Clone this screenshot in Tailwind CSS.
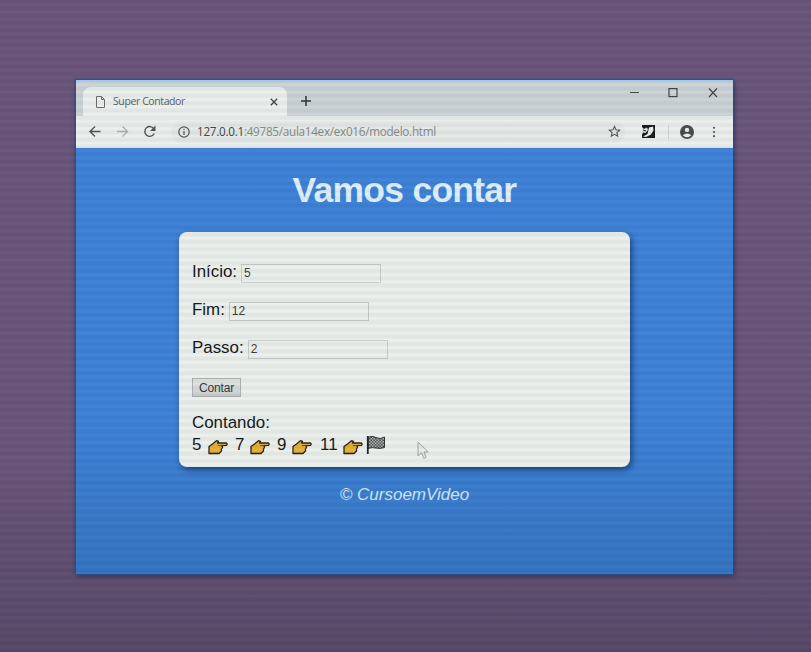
<!DOCTYPE html>
<html lang="pt-br">
<head>
<meta charset="utf-8">
<title>Super Contador</title>
<script src="https://cdn.jsdelivr.net/npm/@tailwindcss/browser@4"></script>
</head>
<body class="relative w-[811px] h-[652px] overflow-hidden bg-linear-to-b from-[#6a567b] from-70% to-[#58496a] pt-20 pl-[76px] font-['Liberation_Sans',Arial,sans-serif]">
<svg class="hidden">
  <symbol id="hand" viewBox="0 0 20 16"><path d="M1 7.500 L4.500 5 L8.500 1.700 L10.500 2.300 L9.500 4 L18.500 4 Q19.700 5.200 18.500 6.400 L14 6.700 L14.500 8.500 L13.500 10 L13.500 12 L11 14.500 L1 14.500Z" fill="#e4b038" stroke="#26221a" stroke-width="1.300" stroke-linejoin="round"/><path d="M10 6.500 L14 6.700" stroke="#4a3b1b" stroke-width=".8" fill="none"/></symbol>
</svg>
<main class="w-[657px] h-[494px] flex flex-col bg-linear-to-b from-[#3e82d8] from-70% to-[#3575c2] shadow-[0_0_2px_1px_#24508c,1px_2px_5px_#382f55]">
  <header class="h-[68px] bg-[#ebefed] border-b border-[#dcebf4]">
    <div class="h-9 flex bg-[#ccd3d6] border-t-2 border-[#a4d3f8] pl-[7px]">
      <div class="w-[204px] h-[29px] mt-[5px] bg-[#ebefed] rounded-t-lg flex items-center pl-3 pr-2">
        <svg class="w-[11px] h-3" viewBox="0 0 11 12" fill="none" stroke="#6a6e6f"><path d="M1.500.5h5l3 3v8h-8zM6.500.5v3h3"/></svg>
        <span class="ml-[7px] text-[10.500px] tracking-[-0.400px] text-[#5d6162] font-['Open_Sans',sans-serif] whitespace-nowrap">Super Contador</span>
        <svg class="ml-auto w-[10px] h-[10px]" viewBox="0 0 10 10" stroke="#424647" stroke-width="1.300"><path d="M1.800 1.800l6.400 6.400M8.200 1.800l-6.400 6.400"/></svg>
      </div>
      <svg class="ml-[13px] mt-[13px] w-3 h-3" viewBox="0 0 12 12" stroke="#303435" stroke-width="1.500"><path d="M6 1v10M1 6h10"/></svg>
      <svg class="ml-auto mr-[15px] mt-[5px] w-[90px] h-3" viewBox="0 0 90 12" fill="none" stroke="#424748" stroke-width="1.200"><path d="M2 5.500h9M81 1.500l8 8.500M89 1.500l-8 8.500"/><rect x="41" y="1.600" width="8" height="8"/></svg>
    </div>
    <div class="h-[31px] flex items-center pl-3 pr-[17px]">
      <svg class="w-[68px] h-4" viewBox="0 0 68 16" fill="none" stroke="#505556" stroke-width="1.400"><path d="M12.500 7.500H2M7 2.500L2 7.500l5 5"/><path stroke="#adb3b2" d="M29 7.500h10.500M34.500 2.500L39.500 7.500l-5 5"/><path d="M66 5A4.900 4.900 0 1 0 66.200 9.500"/><path d="M67.500 1.500v5.500h-5.500z" fill="#505556" stroke="none"/></svg>
      <div class="ml-[15px] w-[454px] h-[22px] rounded-full bg-[#e5e9e7] flex items-center pl-[7px] pr-[4px]">
        <svg class="w-3 h-3" viewBox="0 0 12 12" fill="none" stroke="#505556" stroke-width="1.200"><circle cx="6" cy="6" r="5.200"/><path d="M6 5v4M6 2.800v1.200"/></svg>
        <span class="ml-[7px] text-[11.700px] tracking-[-0.270px] text-[#858a8a] font-['Open_Sans',sans-serif] whitespace-nowrap"><span class="text-[#414647]">127.0.0.1</span>:49785/aula14ex/ex016/modelo.html</span>
        <svg class="ml-auto w-[13px] h-[13px]" viewBox="0 0 14 14" fill="none" stroke="#505556" stroke-width="1.200"><path d="M7 1.600l1.600 3.600 3.900.4-2.900 2.600.8 3.900L7 10.100l-3.400 2 .8-3.900L1.500 5.600l3.900-.4z"/></svg>
      </div>
      <svg class="ml-[17px] w-[13px] h-[13px]" viewBox="0 0 13 13"><path fill="#191c1d" d="M0 0h13v13H0z"/><path d="M0 2l2 2 3-1.500 1 2.500-2.500 3L1 7.500 0 10z" fill="#dfe4e2"/><path d="M7 2.500l4-1 .5 4L9 9.500 4 12l-3-.5L5.500 9z" fill="#e9edeb"/><path d="M1 5l3 1" stroke="#24282a"/></svg>
      <span class="w-px h-[14px] ml-[13px] bg-[#d0d5d4]"></span>
      <svg class="ml-auto mr-[18px] w-[14px] h-[14px]" viewBox="0 0 14 14"><circle cx="7" cy="7" r="7" fill="#484d4e"/><circle cx="7" cy="4.900" r="2.200" fill="#e7ebe9"/><path d="M2.700 10.300Q7 6.500 11.300 10.300Q7 14.300 2.700 10.300" fill="#e7ebe9"/></svg>
      <svg class="w-[4px] h-3" viewBox="0 0 4 12" fill="#505556"><circle cx="2" cy="1.800" r="1.100"/><circle cx="2" cy="6" r="1.100"/><circle cx="2" cy="10.200" r="1.100"/></svg>
    </div>
  </header>
  <h1 class="mt-[21px] h-[42px] leading-[42px] text-center text-[35.500px] tracking-[-0.750px] font-bold text-[#dff0fb]">Vamos contar</h1>
  <section class="mt-[21px] ml-[103px] w-[451px] h-[235px] rounded-lg bg-[#ebf0ec] pl-[13px] pt-[29px] text-[16.900px] leading-[22px] text-[#151819] shadow-[2px_3px_6px_#1c447f]">
    <div class="h-[38px] flex"><label>Início:</label><span class="ml-[4px] mt-[3px] w-[140px] h-[19px] border border-[#c7cdca] pl-[2px] text-[12px] leading-[17px] text-[#3c4041]">5</span></div>
    <div class="h-[38px] flex"><label>Fim:</label><span class="ml-[4px] mt-[3px] w-[140px] h-[19px] border border-[#c2c8c5] pl-[2px] text-[12px] leading-[17px] text-[#3c4041]">12</span></div>
    <div class="h-[38px] flex"><label>Passo:</label><span class="ml-[4px] mt-[3px] w-[140px] h-[19px] border border-[#c7cdca] pl-[2px] text-[12px] leading-[17px] text-[#3c4041]">2</span></div>
    <button class="block mt-[3px] w-[49px] h-[19px] border border-[#adb2b1] bg-linear-to-b from-[#e3e7e5] to-[#cbd0ce] text-[12px] tracking-[-0.150px] leading-[16px] text-[#35393a]">Contar</button>
    <p class="mt-[15px]">Contando:</p>
    <p class="flex items-center whitespace-nowrap">
      <span class="w-[16px]">5</span><svg class="w-5 h-4 mt-1"><use href="#hand"/></svg>
      <span class="w-[15px] ml-[7px]">7</span><svg class="w-5 h-4 mt-1"><use href="#hand"/></svg>
      <span class="w-[15px] ml-[7px]">9</span><svg class="w-5 h-4 mt-1"><use href="#hand"/></svg>
      <span class="w-[23px] ml-[8px]">11</span><svg class="w-5 h-4 mt-1"><use href="#hand"/></svg>
      <svg class="ml-[3px] w-5 h-5" viewBox="0 0 20 20"><defs><pattern id="checks" width="3" height="3" patternUnits="userSpaceOnUse"><path fill="#b8bcba" d="M0 0h3v3H0z"/><path fill="#484c4d" d="M0 0h1.500v1.500H0zM1.500 1.500H3V3H1.500z"/></pattern></defs><path d="M2 2.500Q6 0 10 2.500T18.500 2V12.500Q14 14 10 13T2 13.500Z" fill="url(#checks)" stroke="#303435"/><path d="M1.800 1v18" stroke="#202425" stroke-width="1.800"/></svg>
    </p>
  </section>
  <footer class="mt-[17px] text-center text-[17px] leading-[22px] italic text-[#d1e6f8]">© CursoemVideo</footer>
</main>
<svg class="absolute left-[417px] top-[441px] w-3 h-[19px]" viewBox="0 0 12 19"><path d="M1 1v14l3.500-3.200 2.300 5.500 2.300-1L7 11h4.300z" fill="#e6ebe7" stroke="#a0a5a5"/></svg>
<div class="absolute inset-0 pointer-events-none bg-[repeating-linear-gradient(to_bottom,rgba(0,0,0,0.045)_0px,rgba(0,0,0,0.045)_2px,rgba(255,255,255,0.01)_4px,rgba(255,255,255,0.01)_5px,rgba(0,0,0,0.045)_7.300px)]"></div>
</body>
</html>
